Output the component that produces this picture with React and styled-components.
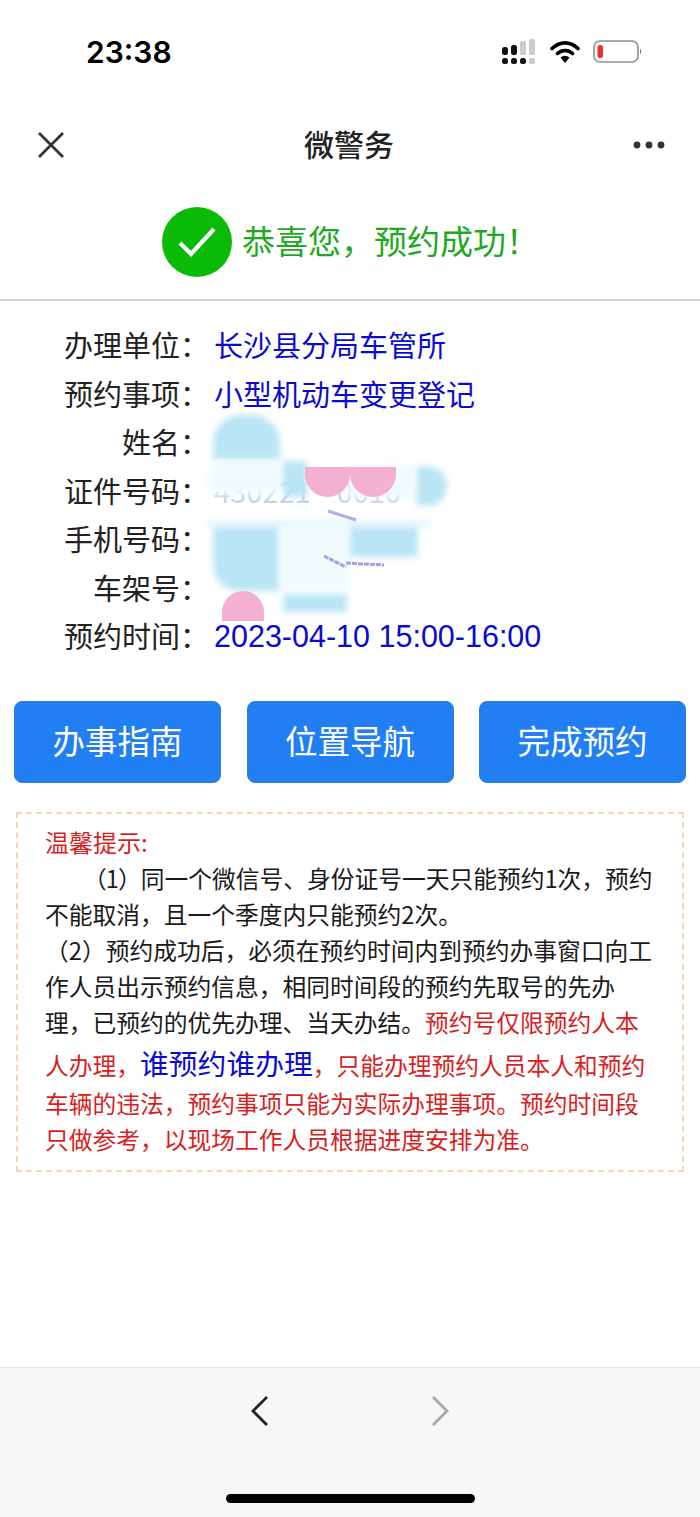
import React from "react";
import styled, { createGlobalStyle } from "styled-components";

const GlobalStyle = createGlobalStyle`
  html, body { margin: 0; padding: 0; background: #fff; }
  body { font-family: "Noto Sans CJK SC", "Liberation Sans", sans-serif; }
`;

const infoRows = [
  { label: "办理单位：", value: "长沙县分局车管所" },
  { label: "预约事项：", value: "小型机动车变更登记" },
  { label: "姓名：", value: "" },
  { label: "证件号码：", value: "430221\u00a0\u00a0\u00a0\u00a00010", pale: true },
  { label: "手机号码：", value: "" },
  { label: "车架号：", value: "" },
  { label: "预约时间：", value: "2023-04-10 15:00-16:00", latin: true },
];

// mosaic patches that hide the personal data, relative to the list
const patches = [
  { x: 213, y: 114, w: 67, h: 45, c: "#b7e4f5", r: "28px 28px 0 0" },
  { x: 207, y: 161, w: 76, h: 33, c: "#f0fbfe", r: "14px" },
  { x: 283, y: 160, w: 24, h: 36, c: "#b7e4f5", r: "0" },
  { x: 347, y: 164, w: 70, h: 33, c: "#f0fbfe", r: "0" },
  { x: 417, y: 165, w: 30, h: 40, c: "#b7e4f5", r: "4px 20px 20px 4px" },
  { x: 207, y: 219, w: 222, h: 7, c: "#dff4fb", r: "0" },
  { x: 213, y: 226, w: 67, h: 64, c: "#b7e4f5", r: "0 0 0 26px" },
  { x: 280, y: 226, w: 70, h: 64, c: "#f0fbfe", r: "0" },
  { x: 350, y: 226, w: 68, h: 30, c: "#b7e4f5", r: "0" },
  { x: 283, y: 293, w: 64, h: 18, c: "#b7e4f5", r: "0" },
];

const pinks = [
  { x: 305, y: 166, w: 45, h: 30, r: "0 0 24px 24px" },
  { x: 350, y: 166, w: 46, h: 30, r: "0 0 24px 24px" },
  { x: 222, y: 290, w: 42, h: 30, r: "24px 24px 0 0" },
];

const App = () => {
  return (
    <Page>
      <GlobalStyle />
      <StatusBar>
        <Clock>23:38</Clock>
        <StatusIcons>
          <svg width="36" height="26" viewBox="0 0 36 26">
            <rect x="1" y="8" width="6" height="8" rx="2.5" fill="#111" />
            <rect x="10" y="6" width="6" height="10" rx="2.5" fill="#111" />
            <rect x="19" y="2" width="6" height="14" rx="1.5" fill="#ccc" />
            <rect x="28" y="0" width="6" height="16" rx="1.5" fill="#ccc" />
            <rect x="1" y="19" width="6" height="6" rx="2.5" fill="#111" />
            <rect x="10" y="19" width="6" height="6" rx="2.5" fill="#111" />
            <rect x="19" y="19" width="6" height="6" rx="2.5" fill="#111" />
            <rect x="28" y="19" width="6" height="6" rx="1.5" fill="#ccc" />
          </svg>
          <svg width="30" height="24" viewBox="0 0 30 24">
            <path d="M2 8.5C10 1 20 1 28 8.5" fill="none" stroke="#000" strokeWidth="3.6" strokeLinecap="round" />
            <path d="M7.5 13.5C12 9.5 18 9.5 22.5 13.5" fill="none" stroke="#000" strokeWidth="3.6" strokeLinecap="round" />
            <path d="M10.5 17.5 Q15 13.8 19.5 17.5 L15 23 Z" fill="#000" />
          </svg>
          <svg width="50" height="24" viewBox="0 0 50 24">
            <rect x="1" y="1" width="44" height="21" rx="6" fill="none" stroke="#8e8e8e" strokeWidth="1.6" />
            <rect x="4.5" y="5" width="5.5" height="13" rx="2.5" fill="#ee2f2f" />
            <path d="M47 8.5 Q49.5 11.5 47 14.5 Z" fill="#777" />
          </svg>
        </StatusIcons>
      </StatusBar>

      <NavBar>
        <svg width="28" height="28" viewBox="0 0 28 28">
          <path d="M2 2L26 26M26 2L2 26" stroke="#333" strokeWidth="2.8" />
        </svg>
        <NavTitle>微警务</NavTitle>
        <svg width="32" height="8" viewBox="0 0 32 8">
          <circle cx="4" cy="4" r="3.4" fill="#333" />
          <circle cx="16" cy="4" r="3.4" fill="#333" />
          <circle cx="28" cy="4" r="3.4" fill="#333" />
        </svg>
      </NavBar>

      <SuccessRow>
        <SuccessCircle>
          <svg width="38" height="30" viewBox="0 0 38 30">
            <path d="M2 16L13 27L36 2" fill="none" stroke="#fff" strokeWidth="4.2" />
          </svg>
        </SuccessCircle>
        <SuccessText>恭喜您，预约成功！</SuccessText>
      </SuccessRow>

      <InfoList>
        {infoRows.map((row) => (
          <InfoRow key={row.label}>
            <InfoLabel>{row.label}</InfoLabel>
            <InfoValue $latin={row.latin} $pale={row.pale}>{row.value}</InfoValue>
          </InfoRow>
        ))}
        {patches.map((p) => (
          <Patch key={`${p.x}-${p.y}`} $x={p.x} $y={p.y} $w={p.w} $h={p.h} $c={p.c} $r={p.r} />
        ))}
        {pinks.map((p) => (
          <PinkPatch key={`${p.x}-${p.y}`} $x={p.x} $y={p.y} $w={p.w} $h={p.h} $r={p.r} />
        ))}
        <Scratch width="70" height="62" viewBox="0 0 70 62">
          <path d="M6 2L34 11" stroke="#b4aee8" strokeWidth="3" />
          <path d="M2 47L24 58M24 54L62 56" stroke="#a79fe6" strokeWidth="3" strokeDasharray="5 1" />
        </Scratch>
      </InfoList>

      <ButtonRow>
        <ActionButton>办事指南</ActionButton>
        <ActionButton>位置导航</ActionButton>
        <ActionButton>完成预约</ActionButton>
      </ButtonRow>

      <Notice>
        <NoticeTitle>温馨提示:</NoticeTitle>
        <NoticeLine $indent><Num>（1）</Num>同一个微信号、身份证号一天只能预约1次，预约</NoticeLine>
        <NoticeLine>不能取消，且一个季度内只能预约2次。</NoticeLine>
        <NoticeLine>（2）预约成功后，必须在预约时间内到预约办事窗口向工</NoticeLine>
        <NoticeLine>作人员出示预约信息，相同时间段的预约先取号的先办</NoticeLine>
        <NoticeLine>理，已预约的优先办理、当天办结。<Red>预约号仅限预约人本</Red></NoticeLine>
        <TallLine>
          <Red>人办理，</Red><BigBlue>谁预约谁办理</BigBlue><Red>，只能办理预约人员本人和预约</Red>
        </TallLine>
        <NoticeLine><Red>车辆的违法，预约事项只能为实际办理事项。预约时间段</Red></NoticeLine>
        <NoticeLine><Red>只做参考，以现场工作人员根据进度安排为准。</Red></NoticeLine>
      </Notice>

      <BottomBar>
        <ArrowRow>
          <svg width="20" height="32" viewBox="0 0 20 32">
            <path d="M17 2L3 16L17 30" fill="none" stroke="#222" strokeWidth="2.8" />
          </svg>
          <svg width="20" height="32" viewBox="0 0 20 32">
            <path d="M3 2L17 16L3 30" fill="none" stroke="#a8a8a8" strokeWidth="2.8" />
          </svg>
        </ArrowRow>
        <HomeBar />
      </BottomBar>
    </Page>
  );
};

export default App;

const Page = styled.div`
  width: 700px;
  height: 1517px;
  display: flex;
  flex-direction: column;
  overflow: hidden;
  background: #fff;
`;
const StatusBar = styled.div`
  height: 104px;
  box-sizing: border-box;
  padding: 0 57px 0 86px;
  display: flex;
  justify-content: space-between;
  align-items: center;
`;
const Clock = styled.div`
  font-family: "Inter", "Liberation Sans", sans-serif;
  font-size: 30px;
  font-weight: 600;
  color: #000;
`;
const StatusIcons = styled.div`
  display: flex;
  align-items: center;
  gap: 13px;
`;
const NavBar = styled.div`
  height: 82px;
  box-sizing: border-box;
  padding: 0 35px 0 37px;
  display: flex;
  justify-content: space-between;
  align-items: center;
`;
const NavTitle = styled.div`
  font-size: 30px;
  font-weight: 500;
  color: #222;
  padding-bottom: 4px;
`;
const SuccessRow = styled.div`
  height: 115px;
  box-sizing: border-box;
  padding: 0 0 2px 162px;
  display: flex;
  align-items: center;
  gap: 10px;
  border-bottom: 2px solid #d2d2d2;
`;
const SuccessCircle = styled.div`
  width: 70px;
  height: 70px;
  border-radius: 50%;
  background: #09bb07;
  display: flex;
  align-items: center;
  justify-content: center;
`;
const SuccessText = styled.div`
  font-size: 33px;
  line-height: 40px;
  color: #1fa91e;
  white-space: nowrap;
  padding-bottom: 4px;
`;
const InfoList = styled.div`
  position: relative;
  padding-top: 19px;
  display: flex;
  flex-direction: column;
`;
const InfoRow = styled.div`
  height: 48.5px;
  display: grid;
  grid-template-columns: 194px 1fr;
  column-gap: 20px;
  align-items: center;
`;
const InfoLabel = styled.div`
  font-size: 29px;
  color: #222;
  text-align: right;
  white-space: nowrap;
  margin-right: -15px;
`;
const InfoValue = styled.div`
  font-family: ${(p) => (p.$latin ? '"Liberation Sans", sans-serif' : '"Noto Sans CJK SC", sans-serif')};
  font-size: ${(p) => (p.$latin ? "30.5px" : "29px")};
  color: ${(p) => (p.$pale ? "#c3d3ee" : "#0b0bd0")};
  white-space: nowrap;
  padding-top: ${(p) => (p.$latin ? "3px" : "0")};
`;
const Patch = styled.div`
  position: absolute;
  left: ${(p) => p.$x}px;
  top: ${(p) => p.$y}px;
  width: ${(p) => p.$w}px;
  height: ${(p) => p.$h}px;
  background: ${(p) => p.$c};
  border-radius: ${(p) => p.$r};
  filter: blur(3px);
  opacity: 0.95;
`;
const PinkPatch = styled.div`
  position: absolute;
  left: ${(p) => p.$x}px;
  top: ${(p) => p.$y}px;
  width: ${(p) => p.$w}px;
  height: ${(p) => p.$h}px;
  background: #f4b0d2;
  border-radius: ${(p) => p.$r};
`;
const Scratch = styled.svg`
  position: absolute;
  left: 322px;
  top: 208px;
`;
const ButtonRow = styled.div`
  margin-top: 41px;
  padding: 0 14px;
  display: flex;
  justify-content: space-between;
`;
const ActionButton = styled.div`
  width: 207px;
  height: 82px;
  box-sizing: border-box;
  border-radius: 8px;
  background: #217ef3;
  border: 1px solid #2f7fdc;
  color: #fff;
  font-size: 32.5px;
  padding-bottom: 5px;
  display: flex;
  align-items: center;
  justify-content: center;
`;
const Notice = styled.div`
  margin: 29px 16px 0;
  height: 360px;
  box-sizing: border-box;
  padding: 10px 0 0 27px;
  border: 2px dashed #f3d6ae;
`;
const NoticeTitle = styled.div`
  font-size: 24px;
  line-height: 36px;
  color: #d81e1e;
`;
const NoticeLine = styled.div`
  font-size: 23.75px;
  line-height: 36px;
  color: #1a1a1a;
  white-space: nowrap;
  padding-left: ${(p) => (p.$indent ? "38px" : "0")};
`;
const Num = styled.span`
  letter-spacing: -1px;
`;
const TallLine = styled(NoticeLine)`
  line-height: 41px;
  margin-top: 2px;
`;
const Red = styled.span`
  color: #d81e1e;
`;
const BigBlue = styled.span`
  font-size: 28.8px;
  color: #0b0bd0;
`;
const BottomBar = styled.div`
  margin-top: auto;
  height: 150px;
  box-sizing: border-box;
  background: #f7f7f7;
  border-top: 1px solid #e8e8e8;
  display: flex;
  flex-direction: column;
  align-items: center;
`;
const ArrowRow = styled.div`
  margin-top: 27px;
  width: 200px;
  display: flex;
  justify-content: space-between;
`;
const HomeBar = styled.div`
  margin-top: 67px;
  width: 249px;
  height: 9px;
  border-radius: 5px;
  background: #000;
`;
